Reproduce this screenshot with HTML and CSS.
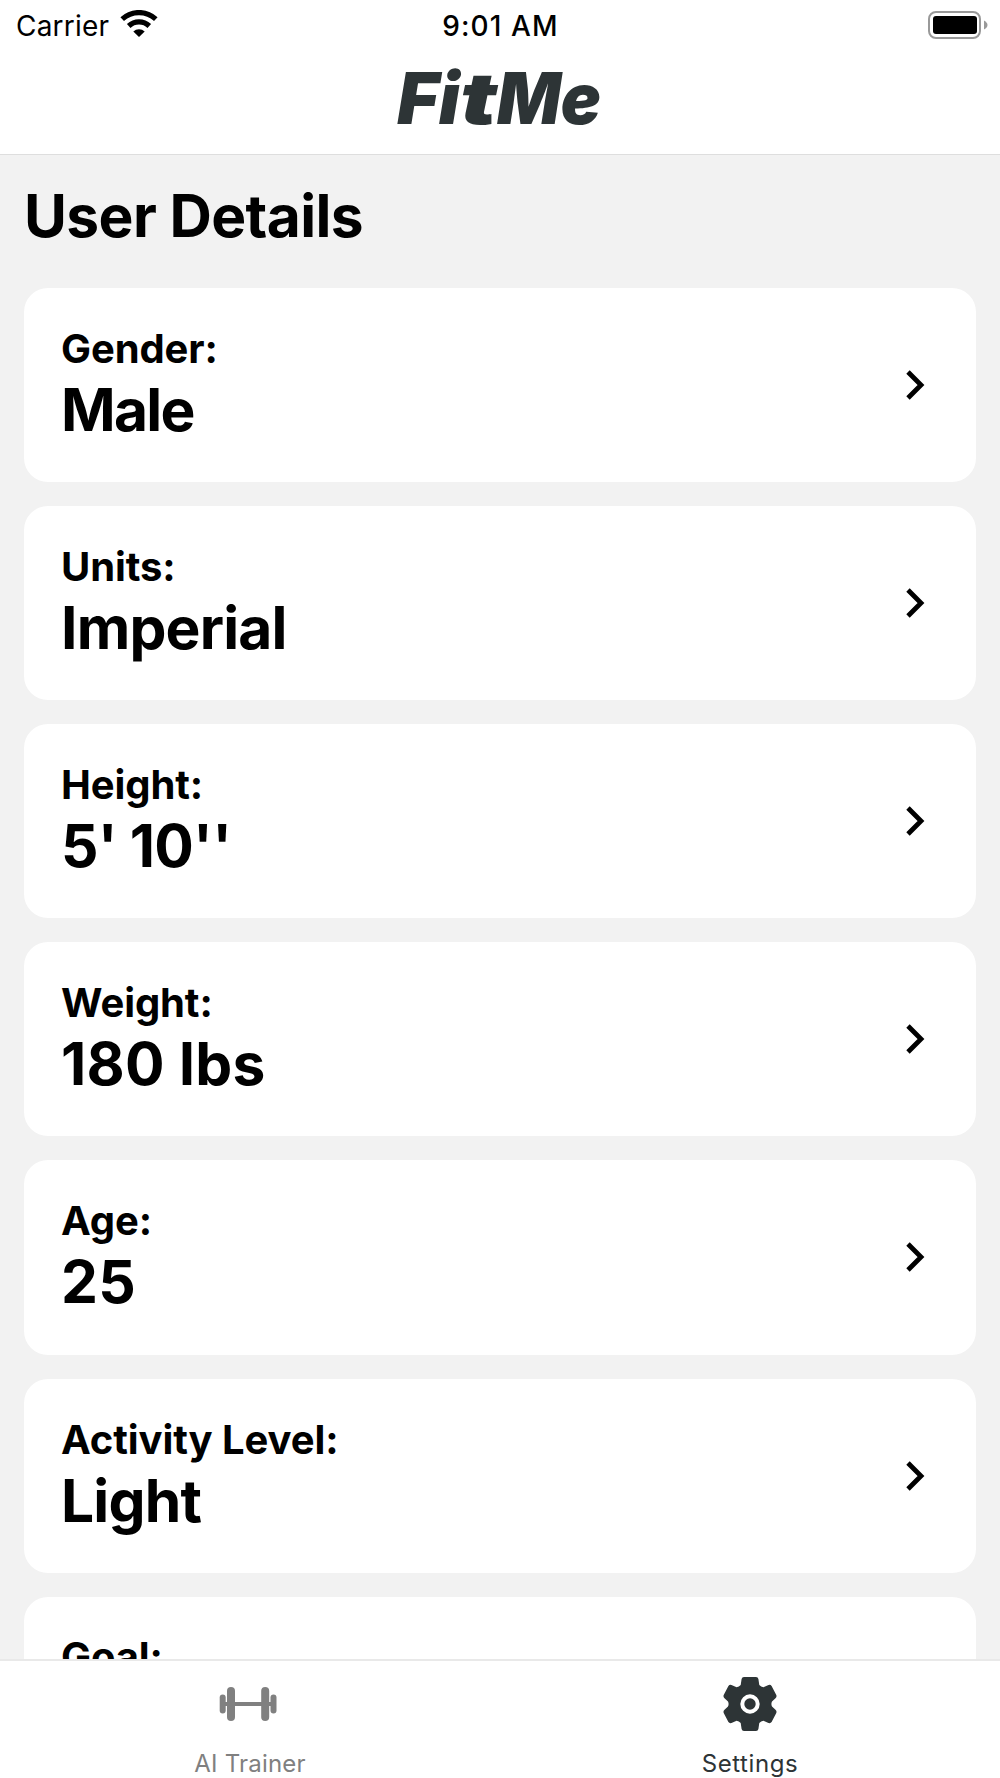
FILE: index.html
```html
<!DOCTYPE html>
<html lang="en">
<head>
  <meta charset="UTF-8">
  <meta name="viewport" content="width=device-width, initial-scale=1.0">
  <title>FitMe</title>
  <link rel="stylesheet" href="styles.css">
</head>
<body>
<div class="app">
  <header class="header">
    <div class="status">
      <div class="carrier">
        <span class="carrier-name">Carrier</span>
        <svg class="wifi" width="38" height="28" viewBox="0 0 38 28">
          <path d="M2.2 9.2 A24.5 24.5 0 0 1 35.8 9.2" fill="none" stroke="#000" stroke-width="5.2"/>
          <path d="M8.7 16 A15 15 0 0 1 29.3 16" fill="none" stroke="#000" stroke-width="5.2"/>
          <path d="M13.3 21.4 A8.6 8.6 0 0 1 24.7 21.4 L19 27 Z"/>
        </svg>
      </div>
      <span class="time">9:01 AM</span>
      <svg class="battery" width="60" height="28" viewBox="0 0 60 28">
        <rect x="1" y="1" width="51" height="26" rx="7" fill="none" stroke="#999" stroke-width="2"/>
        <rect x="5" y="5" width="44" height="18" rx="3"/>
        <path d="M56 9.5 Q59.5 11.5 59.5 14 Q59.5 16.5 56 18.5 Z" fill="#999"/>
      </svg>
    </div>
    <div class="logo">Fi<span class="logo-t">t</span><span class="logo-me">Me</span></div>
  </header>

  <main class="content">
    <h1 class="title">User Details</h1>
    <div class="card">
      <div>
        <div class="label">Gender:</div>
        <div class="value male">Male</div>
      </div>
      <svg class="chevron" width="20" height="32" viewBox="0 0 20 32"><path d="M3 3 L16 16 L3 29"/></svg>
    </div>
    <div class="card">
      <div>
        <div class="label">Units:</div>
        <div class="value">Imperial</div>
      </div>
      <svg class="chevron" width="20" height="32" viewBox="0 0 20 32"><path d="M3 3 L16 16 L3 29"/></svg>
    </div>
    <div class="card">
      <div>
        <div class="label">Height:</div>
        <div class="value">5' 10''</div>
      </div>
      <svg class="chevron" width="20" height="32" viewBox="0 0 20 32"><path d="M3 3 L16 16 L3 29"/></svg>
    </div>
    <div class="card">
      <div>
        <div class="label">Weight:</div>
        <div class="value weight">180 lbs</div>
      </div>
      <svg class="chevron" width="20" height="32" viewBox="0 0 20 32"><path d="M3 3 L16 16 L3 29"/></svg>
    </div>
    <div class="card">
      <div>
        <div class="label">Age:</div>
        <div class="value weight">25</div>
      </div>
      <svg class="chevron" width="20" height="32" viewBox="0 0 20 32"><path d="M3 3 L16 16 L3 29"/></svg>
    </div>
    <div class="card">
      <div>
        <div class="label">Activity Level:</div>
        <div class="value">Light</div>
      </div>
      <svg class="chevron" width="20" height="32" viewBox="0 0 20 32"><path d="M3 3 L16 16 L3 29"/></svg>
    </div>
    <div class="card">
      <div>
        <div class="label">Goal:</div>
      </div>
    </div>
  </main>

  <nav class="tabs">
    <a class="tab">
      <svg width="64" height="64" viewBox="0 0 64 64" fill="#808080">
        <rect x="5" y="30" width="51" height="4"/>
        <rect x="1.7" y="22.5" width="6" height="19" rx="3"/>
        <rect x="9" y="15" width="8" height="34" rx="4"/>
        <rect x="43.2" y="15" width="8" height="34" rx="4"/>
        <rect x="52.5" y="22.5" width="6" height="19" rx="3"/>
      </svg>
      <span class="tab-name trainer">AI Trainer</span>
    </a>
    <a class="tab active">
      <svg width="64" height="64" viewBox="0 0 64 64" fill="#2d3436">
        <path d="M26 5 H38 Q40 5 40.4 7 L41.3 13 Q43 15 45.4 15.2 L50.5 13 Q52.5 12.4 53.6 14 L58.3 23 Q59 25 57.5 26.2 L54 29.5 Q52.8 32 54 34.5 L57.5 37.8 Q59 39 58.3 41 L53.6 50 Q52.5 51.6 50.5 51 L45.4 48.8 Q43 49 41.3 51 L40.4 57 Q40 59 38 59 H26 Q24 59 23.6 57 L22.7 51 Q21 49 18.6 48.8 L13.5 51 Q11.5 51.6 10.4 50 L5.7 41 Q5 39 6.5 37.8 L10 34.5 Q11.2 32 10 29.5 L6.5 26.2 Q5 25 5.7 23 L10.4 14 Q11.5 12.4 13.5 13 L18.6 15.2 Q21 15 22.7 13 L23.6 7 Q24 5 26 5 Z"/>
        <circle cx="32" cy="32" r="7.7" fill="none" stroke="#fff" stroke-width="4"/>
      </svg>
      <span class="tab-name">Settings</span>
    </a>
  </nav>
</div>
</body>
</html>
```

FILE: styles.css
```css
* {
  box-sizing: border-box;
}
body {
  margin: 0;
  font-family: Inter, sans-serif;
  color: #000;
}
.app {
  display: flex;
  flex-direction: column;
  height: 1778px;
  overflow: hidden;
  background: #f2f2f2;
}
.header {
  height: 155px;
  flex: none;
  background: #fff;
  border-bottom: 1px solid #dedede;
}
.status {
  display: grid;
  grid-template-columns: 1fr auto 1fr;
  align-items: center;
  height: 49px;
  padding: 0 12px 0 16px;
}
.carrier {
  display: flex;
  align-items: center;
  gap: 10px;
}
.carrier-name {
  font-size: 28px;
  letter-spacing: 0.2px;
  padding-top: 3px;
}
.wifi {
  margin: 0 0 1px 1px;
}
.time {
  font-size: 28px;
  font-weight: 500;
  letter-spacing: 1.1px;
  padding-top: 3px;
  margin-right: 3px;
}
.battery {
  justify-self: end;
}
.logo {
  text-align: center;
  font-size: 71px;
  line-height: 98px;
  font-weight: 900;
  font-style: italic;
  color: #2d3436;
}
.logo-t {
  display: inline-block;
  margin-right: 9px;
  transform: scaleX(1.3);
  transform-origin: left;
}
.logo-me {
  display: inline-block;
  margin-right: -5px;
  transform: scaleX(0.94);
  transform-origin: left;
}
.content {
  flex: 1;
  min-height: 0;
  overflow: hidden;
  padding: 0 24px;
}
.title {
  margin: 26px 0 36.6px;
  font-size: 58.67px;
  line-height: 70px;
  font-weight: 700;
  letter-spacing: -0.6px;
}
.card {
  display: flex;
  align-items: center;
  justify-content: space-between;
  height: 194.2px;
  margin-bottom: 24px;
  padding: 0 51px 0 37px;
  background: #fff;
  border-radius: 24px;
}
.card:last-child {
  align-items: flex-start;
  padding-top: 36px;
}
.label {
  font-size: 40px;
  line-height: 48px;
  font-weight: 700;
  letter-spacing: -0.1px;
}
.value {
  margin-top: 2px;
  font-size: 58.67px;
  line-height: 70px;
  font-weight: 700;
  letter-spacing: -0.8px;
}
.male {
  letter-spacing: -1.7px;
}
.weight {
  letter-spacing: 0.3px;
}
.chevron {
  fill: none;
  stroke: #000;
  stroke-width: 4.8;
}
.tabs {
  display: flex;
  flex: none;
  height: 119px;
  background: #fff;
  border-top: 2px solid #e9e9e9;
}
.tab {
  flex: 1;
  display: flex;
  flex-direction: column;
  align-items: center;
  padding-top: 11px;
  color: #808080;
}
.active {
  color: #2d3436;
}
.tab-name {
  margin-top: 14px;
  font-size: 24px;
  line-height: 28px;
  letter-spacing: 0.6px;
}
.trainer {
  letter-spacing: 0.2px;
}
```
